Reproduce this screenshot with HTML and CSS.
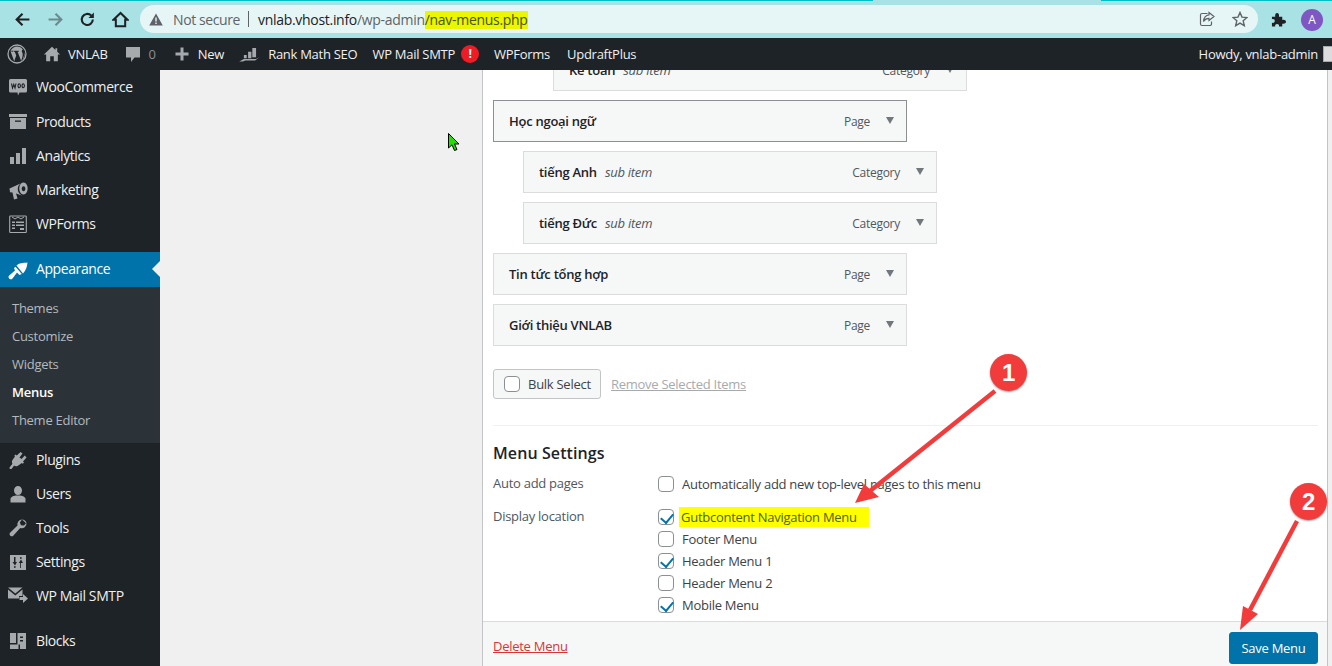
FILE: index.html
```html
<!DOCTYPE html>
<html>

<head>
  <title>Menus - VNLAB</title>
  <link rel="stylesheet" href="styles.css">
</head>

<body>
  <div class="browser">
    <div class="progress">
      <span class="progress-a"></span>
      <span class="progress-b"></span>
    </div>
    <div class="toolbar">
      <div class="nav-buttons">
        <svg class="nav-icon" viewBox="0 0 16 16"><path d="M14.5 8H2.5M8 2.5 2.5 8 8 13.5" fill="none" stroke="#202124" stroke-width="2"/></svg>
        <svg class="nav-icon" viewBox="0 0 16 16"><path d="M1.5 8H13.5M8 2.5 13.5 8 8 13.5" fill="none" stroke="#6d8a8c" stroke-width="2"/></svg>
        <svg class="nav-icon" viewBox="0 0 16 16"><path d="M13 8A5.2 5.2 0 1 1 11.5 4.3" fill="none" stroke="#202124" stroke-width="2"/><path d="M14 1.5V6.6H8.9Z" fill="#202124"/></svg>
        <svg class="nav-icon" viewBox="0 0 16 16"><path d="M8 1.8 1.5 8.2H3.6V14.3H12.4V8.2H14.5Z" fill="none" stroke="#202124" stroke-width="1.9"/></svg>
      </div>
      <div class="omnibox">
        <svg class="warn-icon" viewBox="0 0 14 13"><path d="M7 .5 13.8 12.5H.2Z" fill="#5f6368"/><path d="M6.3 4.5H7.7V8.6H6.3ZM6.3 9.5H7.7V10.9H6.3Z" fill="#e6f6f7"/></svg>
        <span class="not-secure">Not secure</span>
        <span class="omni-sep"></span>
        <span class="url"><span class="url-host">vnlab.vhost.info</span>/wp-admin<span class="url-mark">/nav-menus.php</span></span>
        <span class="omni-space"></span>
        <svg class="omni-icon" viewBox="0 0 16 16"><path d="M8.5 2.5H3A1.5 1.5 0 0 0 1.500 4V13A1.500 1.500 0 0 0 3 14.500H11A1.500 1.500 0 0 0 12.500 13V10.500" fill="none" stroke="#5f6368" stroke-width="1.200"/><path d="M10 1.500 15 5.500 10 9.500V7.300C7.500 7.300 5.800 8.300 4.500 10.500 4.800 7 6.800 4.200 10 3.800Z" fill="none" stroke="#5f6368" stroke-width="1.200"/></svg>
        <svg class="omni-icon star-icon" viewBox="0 0 16 16"><path d="M8 1.500 10 6.100 15 6.500 11.200 9.800 12.300 14.700 8 12.100 3.700 14.700 4.800 9.800 1 6.500 6 6.100Z" fill="none" stroke="#5f6368" stroke-width="1.400"/></svg>
      </div>
      <svg class="puzzle" viewBox="0 0 16 16"><path d="M1 5H4.500C4 2 5.300 1 6.500 1S9 2 8.500 5H12V8.500C15 8 16 9.300 16 10.500S15 13 12 12.500V15.500H8.500C9 13.500 7.800 12.700 6.500 12.700S4 13.500 4.500 15.500H1V11.500C3 12 4 10.800 4 9.500S3 7.200 1 7.700Z" fill="#202124"/></svg>
      <div class="profile">A</div>
    </div>
  </div>

  <div class="adminbar">
    <div class="bar-left">
      <svg class="wp-logo" viewBox="0 0 20 20"><circle cx="10" cy="10" r="9" fill="none" stroke="#a7aaad" stroke-width="1.300"/><path d="M3.500 7.300 7.200 17.300 9.200 11.500 7.800 7.700H6.700V6.800H11.800V7.700H10.600L14.200 17 15.300 13.200C16 10.800 15.800 9.500 15 8 14.500 7 14.800 5.800 16 5.600 14.500 3.700 12.300 2.600 10 2.600 7.300 2.600 5 4.200 3.500 6.800H6V7.700Z M17 8 17.200 9.500 C17.300 11 16.800 12.500 16.300 14 L15.200 16.500C16.700 15 17.500 13 17.500 10.500 17.500 9.700 17.300 8.800 17 8Z" fill="#a7aaad"/></svg>
      <div class="bar-item home-item">
        <svg class="bar-icon" viewBox="0 0 20 20"><path d="M10 2 1 10.500H3.500V18H8V12.500H12V18H16.500V10.500H19L15.800 7.500V3.500H13.800V5.600Z" fill="#a7aaad"/></svg>
        <span>VNLAB</span>
      </div>
      <div class="bar-item comment-item">
        <svg class="bar-icon" viewBox="0 0 20 20"><path d="M3 3H17V13.500H11.500L8 18V13.500H3Z" fill="#a7aaad"/></svg>
        <span class="bar-muted">0</span>
      </div>
      <div class="bar-item new-item">
        <svg class="bar-icon" viewBox="0 0 20 20"><path d="M8.500 3.500H11.500V8.500H16.500V11.500H11.500V16.500H8.500V11.500H3.500V8.500H8.500Z" fill="#a7aaad"/></svg>
        <span>New</span>
      </div>
      <div class="bar-item rank-item">
        <svg class="rank-icon" viewBox="0 0 22 16"><path d="M5 8.500H8V12H5ZM9.500 5H13V12H9.500ZM14 1H18V11H14ZM0 15.500 5 12.800H18L21.500 11 17 14.500H6.500L4 15.500Z" fill="#a7aaad"/></svg>
        <span>Rank Math SEO</span>
      </div>
      <div class="bar-item smtp-item">
        <span>WP Mail SMTP</span>
        <span class="alert">!</span>
      </div>
      <div class="bar-item forms-item"><span>WPForms</span></div>
      <div class="bar-item"><span>UpdraftPlus</span></div>
    </div>
    <div class="bar-right">
      <span>Howdy, vnlab-admin</span>
      <span class="bar-avatar"></span>
    </div>
  </div>

  <div class="wpwrap">
    <div class="sidebar">
      <div class="menu-item">
        <svg class="menu-icon" viewBox="0 0 20 20"><path d="M2.500 2H17.500A1.500 1.500 0 0 1 19 3.500V14A1.500 1.500 0 0 1 17.500 15.500H11.500L10 18.500 9.500 15.500H2.500A1.500 1.500 0 0 1 1 14V3.500A1.500 1.500 0 0 1 2.500 2Z" fill="#a7aaad"/><path d="M3.500 6.500 4.500 11 5.800 7.500 7 11 8 6.500M10 8.800A1.200 2 0 1 0 10 8.700ZM14 8.800A1.200 2 0 1 0 14 8.700Z" fill="none" stroke="#1d2327" stroke-width="1.100"/></svg>
        <span>WooCommerce</span>
      </div>
      <div class="menu-item products">
        <svg class="menu-icon" viewBox="0 0 20 20"><path d="M1 2H19V5H1ZM2 6H18V17H2Z" fill="#a7aaad"/><path d="M7 8.500H13V9.800H7Z" fill="#1d2327"/></svg>
        <span>Products</span>
      </div>
      <div class="menu-item">
        <svg class="menu-icon" viewBox="0 0 20 20"><path d="M2 11H6V18H2ZM8 7H12V18H8ZM14 2H18V18H14Z" fill="#a7aaad"/></svg>
        <span>Analytics</span>
      </div>
      <div class="menu-item">
        <svg class="menu-icon" viewBox="0 0 20 20"><path d="M1.500 8.500 12.500 3.500A7 7 0 0 0 14 15.500L8 13.500 9.500 18.500 6 19.500 4.500 12.500 2 12.300Z" fill="#a7aaad"/><path d="M15.500 2.500A4.200 6 0 1 1 15.400 2.500ZM15.500 6.200A1.800 2.500 0 1 0 15.600 6.200Z" fill="#a7aaad" fill-rule="evenodd"/></svg>
        <span>Marketing</span>
      </div>
      <div class="menu-item">
        <svg class="menu-icon" viewBox="0 0 20 20"><path d="M2.500 2H17.500A.8.8 0 0 1 18.300 2.800V17.700A.8.8 0 0 1 17.500 18.500H2.500A.8.8 0 0 1 1.700 17.700V2.800A.8.8 0 0 1 2.500 2Z" fill="none" stroke="#a7aaad" stroke-width="1.100"/><path d="M4 3 7 5 10 3 13 5 16 3" fill="none" stroke="#a7aaad"/><path d="M4 7.500H7V9H4ZM8 7.500H16V9H8ZM4 10.500H7V12H4ZM8 10.500H16V12H8ZM4 13.500H7V15H4ZM12 14H16V16H12Z" fill="#a7aaad"/></svg>
        <span>WPForms</span>
      </div>

      <div class="menu-item menu-current">
        <svg class="menu-icon" viewBox="0 0 20 20"><path d="M8.500 5.500C11 3 15 3 19.500 2.500 19 7 18 10 15 13.500ZM7.500 6.800 13.800 14 11.500 15 9 12.500 4.500 18.500A2.100 2.100 0 0 1 1.200 15.500L7 10.500 6 8Z" fill="#fff"/></svg>
        <span>Appearance</span>
      </div>
      <div class="submenu">
        <a>Themes</a>
        <a>Customize</a>
        <a>Widgets</a>
        <a class="sub-current">Menus</a>
        <a>Theme Editor</a>
      </div>

      <div class="menu-item">
        <svg class="menu-icon" viewBox="0 0 20 20"><path d="M12.500 2 14.500 3.500 11.500 7.500 13.500 9 16.800 5.500 18.500 7.500 15 11.500 16 12.500 14.800 13.800 13.800 13 11 15C8.500 17 6.800 16 6.200 15.500L3.500 19H1.800L1.500 17.500 4.500 13.800C3.800 13 3.500 11 5 9.300L7 6.500 6.300 5.800 7.500 4.500 8.800 5.500Z" fill="#a7aaad"/></svg>
        <span>Plugins</span>
      </div>
      <div class="menu-item">
        <svg class="menu-icon" viewBox="0 0 20 20"><path d="M10 2A4 4.500 0 1 1 10 11 4 4.500 0 1 1 10 2ZM2.500 14.500C4 11.800 7 11.500 10 11.500S16 11.800 17.500 14.500V18.500H2.500Z" fill="#a7aaad"/></svg>
        <span>Users</span>
      </div>
      <div class="menu-item">
        <svg class="menu-icon" viewBox="0 0 20 20"><path d="M14 1.500A5 5 0 0 1 18.500 5 4.800 4.800 0 0 1 12.200 10L5 18A2.300 2.300 0 0 1 1.800 15L9.500 7.500A4.800 4.800 0 0 1 14 1.500L11.800 4.500 13 7.300 16 7.500 18 5.200Z" fill="#a7aaad"/></svg>
        <span>Tools</span>
      </div>
      <div class="menu-item">
        <svg class="menu-icon" viewBox="0 0 20 20"><path d="M2 3H18V18H2ZM6 5V10H4.500L7 13.500 9 10H7.500V5ZM6.200 14V16H7.500V14ZM13 16V11H15L13 7.500 10.800 11H12.200V16ZM12.200 5V7H13.500V5Z" fill="#a7aaad" fill-rule="evenodd"/></svg>
        <span>Settings</span>
      </div>
      <div class="menu-item smtp-menu">
        <svg class="menu-icon" viewBox="0 0 20 20"><path d="M0 1.500H14.500L7.300 7.500ZM0 3.500 7.300 9.500 14.500 3.500V10H11V12.500H0ZM15 8 20 12.500 15 17V14H11.500V11H15Z" fill="#a7aaad"/></svg>
        <span>WP Mail SMTP</span>
      </div>
      <div class="menu-item blocks">
        <svg class="menu-icon" viewBox="0 0 20 20"><path d="M2 2H8V12H2ZM9.500 2H18V18H12V13.500H9.500ZM2 13.500H10.500V18H2Z" fill="#a7aaad"/><path d="M12 5.500H15V7H12ZM12 9H15V10.500H12Z" fill="#1d2327"/></svg>
        <span>Blocks</span>
      </div>
    </div>

    <div class="gutter"></div>

    <div class="panel">
      <div class="panel-body">
        <ul class="menu-list">
          <li class="item depth-2"><span class="item-title">Kế toán <em>sub item</em></span><span class="item-type">Category</span><i class="caret"></i></li>
          <li class="item item-focus"><span class="item-title">Học ngoại ngữ</span><span class="item-type">Page</span><i class="caret"></i></li>
          <li class="item depth-1"><span class="item-title">tiếng Anh <em>sub item</em></span><span class="item-type">Category</span><i class="caret"></i></li>
          <li class="item depth-1"><span class="item-title">tiếng Đức <em>sub item</em></span><span class="item-type">Category</span><i class="caret"></i></li>
          <li class="item"><span class="item-title">Tin tức tổng hợp</span><span class="item-type">Page</span><i class="caret"></i></li>
          <li class="item"><span class="item-title">Giới thiệu VNLAB</span><span class="item-type">Page</span><i class="caret"></i></li>
        </ul>

        <div class="bulk-row">
          <label class="bulk-btn"><span class="check"></span>Bulk Select</label>
          <a class="remove-link">Remove Selected Items</a>
        </div>

        <div class="settings">
          <h3>Menu Settings</h3>
          <div class="setting-row auto-row">
            <div class="setting-label">Auto add pages</div>
            <div class="setting-value">
              <label class="opt"><span class="check"></span>Automatically add new top-level pages to this menu</label>
            </div>
          </div>
          <div class="setting-row">
            <div class="setting-label">Display location</div>
            <div class="setting-value">
              <label class="opt"><span class="check checked"></span><span class="marked">Gutbcontent Navigation Menu</span></label>
              <label class="opt"><span class="check"></span>Footer Menu</label>
              <label class="opt"><span class="check checked"></span>Header Menu 1</label>
              <label class="opt"><span class="check"></span>Header Menu 2</label>
              <label class="opt"><span class="check checked"></span>Mobile Menu</label>
            </div>
          </div>
        </div>
      </div>
      <div class="panel-footer">
        <a class="delete-link">Delete Menu</a>
        <button class="save-btn">Save Menu</button>
      </div>
    </div>
  </div>

  <!-- marks drawn over the screenshot -->
  <svg class="cursor" viewBox="0 0 12 19"><path d="M.5.500V15L4 11.800 6.500 17.500 9 16.500 6.500 11H11Z" fill="#22e000" stroke="#000"/></svg>
  <svg class="arrows" viewBox="0 0 1332 666">
    <path d="M995 391 870 491" stroke="#f23c3c" stroke-width="4.500" fill="none"/>
    <path d="M855 503 864 484 879 497Z" fill="#f23c3c"/>
    <path d="M1297 521 1250 610" stroke="#f23c3c" stroke-width="4.500" fill="none"/>
    <path d="M1240 630 1243 606 1258 614Z" fill="#f23c3c"/>
  </svg>
  <div class="badge badge-one">1</div>
  <div class="badge badge-two">2</div>
</body>

</html>
```

FILE: styles.css
```css
* {
  box-sizing: border-box;
}

html,
body {
  margin: 0;
  height: 666px;
  overflow: hidden;
}

body {
  position: relative;
  font-family: "Open Sans", "Noto Sans", sans-serif;
  font-size: 13px;
  letter-spacing: -0.27px;
  color: #3c434a;
  background: #f0f0f1;
}

/* browser chrome */
.browser {
  height: 38px;
  background: #a8e2e4;
}

.progress {
  height: 1px;
  display: flex;
}

.progress-a {
  width: 873px;
  background: #00bfc6;
}

.progress-b {
  margin-left: 228px;
  width: 231px;
  background: #00bfc6;
}

.toolbar {
  height: 37px;
  display: flex;
  align-items: center;
}

.nav-buttons {
  width: 140px;
  flex: none;
  display: flex;
  gap: 15.500px;
  padding-left: 14px;
}

.nav-icon {
  width: 17px;
  height: 17px;
}

.omnibox {
  width: 1118px;
  height: 28px;
  flex: none;
  margin-top: -1px;
  border-radius: 14px;
  background: #e6f6f7;
  display: flex;
  align-items: center;
  padding-left: 9px;
  font-size: 14px;
  letter-spacing: -0.4px;
}

.warn-icon {
  width: 14px;
  height: 13px;
}

.not-secure {
  margin-left: 10px;
  color: #5f6368;
}

.omni-sep {
  width: 1px;
  height: 16px;
  margin: 0 9px 0 8px;
  background: #5f6368;
}

.url {
  color: #5f6368;
  letter-spacing: -0.3px;
}

.url-host {
  color: #202124;
}

.url-mark {
  display: inline-block;
  height: 18px;
  line-height: 18px;
  background: #eaf700;
  color: #4a5200;
}

.omni-space {
  flex: 1;
}

.omni-icon {
  width: 16px;
  height: 16px;
}

.star-icon {
  margin-left: 17px;
  margin-right: 10px;
}

.puzzle {
  width: 15px;
  height: 15px;
  margin-left: 13px;
}

.profile {
  width: 22px;
  height: 22px;
  margin-left: 15px;
  border-radius: 50%;
  background: #7e57c2;
  color: #fff;
  font-size: 12px;
  line-height: 22px;
  text-align: center;
}

/* wp admin bar */
.adminbar {
  height: 32px;
  background: #1d2327;
  color: #f0f0f1;
  display: flex;
  justify-content: space-between;
  position: relative;
  z-index: 2;
}

.bar-left,
.bar-right,
.bar-item {
  display: flex;
  align-items: center;
}

.wp-logo {
  width: 20px;
  height: 20px;
  margin: 0 16px 0 7px;
}

.bar-item {
  margin-right: 15px;
}

.bar-icon {
  width: 20px;
  height: 20px;
  margin-right: 6px;
}

.home-item .bar-icon {
  width: 18px;
  height: 18px;
  margin-right: 7px;
}

.comment-item {
  margin-right: 16px;
}

.rank-icon {
  width: 21px;
  height: 15px;
  margin-right: 8px;
}

.bar-muted {
  color: #8c8f94;
}

.smtp-item {
  margin-right: 15px;
}

.alert {
  width: 18px;
  height: 18px;
  margin-left: 6px;
  border-radius: 50%;
  background: #ee1c24;
  color: #fff;
  font-weight: 700;
  font-size: 12px;
  line-height: 18px;
  text-align: center;
}

.forms-item {
  margin-right: 17px;
}

.bar-right {
  gap: 5px;
}

.bar-avatar {
  width: 9px;
  height: 16px;
  background: #dcdcde;
  border: 1px solid #a7aaad;
  border-right: 0;
}

/* page */
.wpwrap {
  height: 596px;
  display: flex;
}

.sidebar {
  width: 160px;
  background: #1d2327;
  color: #f0f0f1;
  font-size: 14px;
  letter-spacing: -0.4px;
}

.menu-item {
  height: 34px;
  display: flex;
  align-items: center;
  padding-left: 8px;
  gap: 8px;
}

.menu-item span {
  margin-bottom: 2px;
}

.menu-icon {
  width: 20px;
  height: 20px;
  flex: none;
}

.products {
  height: 35px;
}

.products span {
  margin-bottom: 0;
}

.menu-current {
  height: 35px;
  margin-top: 11px;
  background: #0073aa;
  color: #fff;
  position: relative;
}

/* the little notch pointing at the content */
.menu-current::after {
  content: "";
  position: absolute;
  right: 0;
  top: 9px;
  border: 8px solid transparent;
  border-right-color: #f0f0f1;
  border-left-width: 0;
}

.submenu {
  height: 156px;
  background: #2c3338;
  padding-top: 7px;
  font-size: 13px;
  letter-spacing: -0.27px;
  color: #b4b9be;
}

.submenu a {
  display: block;
  height: 28px;
  line-height: 28px;
  padding-left: 12px;
}

.submenu .sub-current {
  color: #fff;
  font-weight: 600;
}

.blocks {
  margin-top: 11px;
}

.gutter {
  width: 322px;
}

.panel {
  width: 846px;
  height: 596px;
  background: #fff;
  border-left: 1px solid #c3c4c7;
  border-right: 1px solid #c3c4c7;
  display: flex;
  flex-direction: column;
}

.panel-body {
  flex: 1;
  overflow: hidden;
  padding: 0 9px 0 10px;
}

.menu-list {
  list-style: none;
  margin: -21px 0 0;
  padding: 0;
}

.item {
  width: 414px;
  height: 42px;
  margin-bottom: 9px;
  padding: 0 10px 0 15px;
  border: 1px solid #dcdcde;
  background: #f6f7f7;
  display: flex;
  align-items: center;
  font-size: 13px;
}

.item-focus {
  border-color: #8c8f94;
}

.depth-1 {
  margin-left: 30px;
}

.depth-2 {
  margin-left: 60px;
}

.item-title {
  flex: 1;
  color: #1d2327;
  font-weight: 600;
}

.item-title em {
  font-weight: 400;
  color: #50575e;
  margin-left: 5px;
}

.item-type {
  font-size: 12px;
  color: #50575e;
  margin-right: 16px;
}

.caret {
  width: 0;
  height: 0;
  margin-right: 2px;
  margin-top: -2px;
  border-style: solid;
  border-width: 7px 4px 0;
  border-color: #72777c transparent transparent;
}

.bulk-row {
  display: flex;
  align-items: center;
  gap: 10px;
  margin-top: 23px;
}

.bulk-btn {
  width: 108px;
  height: 30px;
  border: 1px solid #c3c4c7;
  border-radius: 3px;
  background: #f6f7f7;
  display: flex;
  align-items: center;
  gap: 8px;
  padding-left: 10px;
}

.remove-link {
  color: #a7aaad;
  text-decoration: underline;
}

.settings {
  margin-top: 26px;
  padding-top: 17px;
  border-top: 1px solid #f0f0f1;
}

.settings h3 {
  margin: 0 0 10px;
  font-size: 16px;
  line-height: 20px;
  font-weight: 600;
  letter-spacing: 0.1px;
  color: #1d2327;
}

.setting-row {
  display: flex;
}

.auto-row {
  margin-bottom: 11px;
}

.setting-label {
  width: 165px;
  margin-top: -1px;
  line-height: 22px;
  color: #50575e;
}

.opt {
  display: flex;
  align-items: center;
  gap: 8px;
  height: 22px;
  color: #3c434a;
}

.check {
  width: 16px;
  height: 16px;
  flex: none;
  border: 1px solid #8c8f94;
  border-radius: 4px;
  background: #fff;
  position: relative;
}

.checked::after {
  content: "";
  position: absolute;
  left: 4px;
  top: 1px;
  width: 6px;
  height: 10px;
  border: solid #0073aa;
  border-width: 0 2.500px 2.500px 0;
  transform: rotate(40deg);
}

.marked {
  width: 190px;
  height: 20px;
  margin-left: -3px;
  padding-left: 2px;
  line-height: 20px;
  background: #ffff00;
  color: #4f6400;
}

.panel-footer {
  height: 45px;
  flex: none;
  border-top: 1px solid #dcdcde;
  background: #f6f7f7;
  display: flex;
  justify-content: space-between;
  align-items: center;
  padding: 8px 9px 0 10px;
}

.delete-link {
  margin-top: -4px;
  color: #d63638;
  text-decoration: underline;
}

.save-btn {
  width: 89px;
  height: 32px;
  border: 1px solid #0073aa;
  border-radius: 3px;
  background: #0073aa;
  color: #fff;
  font: inherit;
  letter-spacing: inherit;
}

/* annotations on top of the screenshot */
.cursor {
  position: absolute;
  left: 448px;
  top: 133px;
  width: 12px;
  height: 19px;
}

.arrows {
  position: absolute;
  left: 0;
  top: 0;
  width: 1332px;
  height: 666px;
  pointer-events: none;
}

.badge {
  position: absolute;
  width: 37px;
  height: 37px;
  border-radius: 50%;
  background: #f23c3c;
  color: #fff;
  font-family: "Liberation Sans", sans-serif;
  font-weight: 700;
  font-size: 24px;
  line-height: 37px;
  text-align: center;
  box-shadow: 0 1px 2px rgba(0, 0, 0, 0.4);
}

.badge-one {
  left: 990px;
  top: 354px;
}

.badge-two {
  left: 1290px;
  top: 483px;
}
```
